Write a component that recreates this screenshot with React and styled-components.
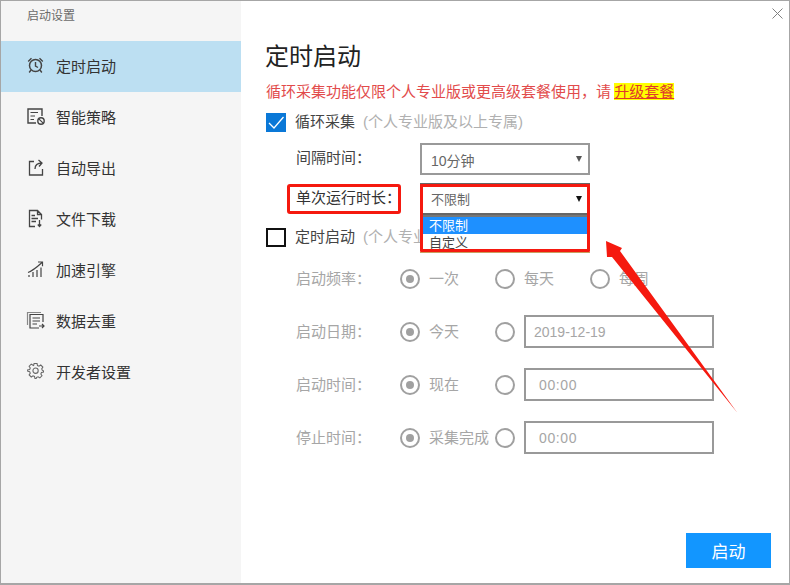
import React from "react";
import styled, { createGlobalStyle } from "styled-components";

const navItems = [
  { id: 1, title: "定时启动", icon: "clock" },
  { id: 2, title: "智能策略", icon: "strategy" },
  { id: 3, title: "自动导出", icon: "export" },
  { id: 4, title: "文件下载", icon: "download" },
  { id: 5, title: "加速引擎", icon: "speed" },
  { id: 6, title: "数据去重", icon: "dedupe" },
  { id: 7, title: "开发者设置", icon: "gear" },
];

const icons = {
  clock: (
    <>
      <circle cx="9.5" cy="9.5" r="6" strokeWidth="1.5" />
      <path
        d="M9.5 6V10L12 11.5M2.2 5.5L5.5 2.2M16.8 5.5L13.5 2.2M5 14L3.2 16.5M14 14L15.8 16.5"
        strokeWidth="1.4"
      />
    </>
  ),
  strategy: (
    <>
      <path d="M10 16H2V2H16V9" strokeWidth="1.4" />
      <path d="M4.5 5.5H12M4.5 9H9M4.5 12.5H8" />
      <circle cx="15" cy="14" r="3.2" strokeWidth="1.4" />
      <path d="M12.8 11.8L17.2 16.2" />
    </>
  ),
  export: (
    <path
      d="M8 3.5H3.5V17H16.5V11M9 11C9 7 11 5 16 5M12.5 2L16 5L13 8.5"
      strokeWidth="1.3"
    />
  ),
  download: (
    <path
      d="M9 17.5H3.5V1.5H11.5L15.5 5.5V10.5M11.5 1.5V5.5H15.5M5.5 6.5H9M5.5 9.5H12M5.5 12.5H10M13.5 11V17.5M11.8 15.5L13.5 17.5L15.2 15.5"
      strokeWidth="1.3"
    />
  ),
  speed: (
    <path d="M2 12.5C6 11 10 8 16 2.5M12 2H16.5V6.2M3 17V15M7 17V12M11 17V10M15 17V7.5" />
  ),
  dedupe: (
    <>
      <path d="M1.5 14V1.5H15" stroke="#888" />
      <path d="M17 11V3.5H4V17H13" />
      <path d="M6.5 7H14M6.5 10H14M6.5 13H11M13 15H18M16 13L18 15L16 17" />
    </>
  ),
  gear: (
    <g transform="translate(1.2 0.2) scale(0.88)" stroke="#666">
      <path d="M7.8 1.5H11.2L11.7 3.8L13.4 4.5L15.4 3.2L17.8 5.6L16.5 7.6L17.2 9.3L18.5 9.8V11.2L16.2 11.7L15.5 13.4L16.8 15.4L14.4 17.8L12.4 16.5L10.7 17.2L10.2 18.5H8.8L8.3 16.2L6.6 15.5L4.6 16.8L2.2 14.4L3.5 12.4L2.8 10.7L0.5 10.2V8.8L2.8 8.3L3.5 6.6L2.2 4.6L4.6 2.2L6.6 3.5L7.3 3.8Z" />
      <circle cx="9.5" cy="9.7" r="3" />
    </g>
  ),
};

const scheduleRows = [
  { id: 1, label: "启动频率：", first: "一次", options: ["每天", "每周"] },
  { id: 2, label: "启动日期：", first: "今天", value: "2019-12-19" },
  { id: 3, label: "启动时间：", first: "现在", value: "00:00", indented: true },
  { id: 4, label: "停止时间：", first: "采集完成", value: "00:00", indented: true },
];

const App = () => (
  <>
    <GlobalStyle />
    <Dialog>
      <Sidebar>
        <SidebarTitle>启动设置</SidebarTitle>
        {navItems.map((item, i) => (
          <NavItem key={item.id} $active={i === 0}>
            <NavIcon viewBox="0 0 19 19">{icons[item.icon]}</NavIcon>
            <NavText>{item.title}</NavText>
          </NavItem>
        ))}
      </Sidebar>
      <Main>
        <CloseIcon viewBox="0 0 11 11">
          <path d="M0.5 0.5L10.5 10.5M10.5 0.5L0.5 10.5" />
        </CloseIcon>
        <Title>定时启动</Title>
        <Notice>
          循环采集功能仅限个人专业版或更高级套餐使用，请 <Upgrade>升级套餐</Upgrade>
        </Notice>
        <CheckRow>
          <CheckedBox>
            <svg width="20" height="19" viewBox="0 0 20 19">
              <path d="M3 10L8 15L17.5 4" fill="none" stroke="#fff" strokeWidth="1.3" />
            </svg>
          </CheckedBox>
          <CheckLabel>循环采集</CheckLabel>
          <Hint>(个人专业版及以上专属)</Hint>
        </CheckRow>
        <SelectRow>
          <SelectLabel>间隔时间：</SelectLabel>
          <SelectBox>
            10分钟
            <Caret />
          </SelectBox>
        </SelectRow>
        <SelectRow $open>
          <SelectLabel $strong>
            单次运行时长：
            <LabelMark />
          </SelectLabel>
          <SelectBox $open>
            不限制
            <Caret $open />
            <Dropdown>
              <DropdownOption $selected>不限制</DropdownOption>
              <DropdownOption>自定义</DropdownOption>
            </Dropdown>
            <DropdownMark />
          </SelectBox>
        </SelectRow>
        <CheckRow $second>
          <EmptyBox />
          <CheckLabel>定时启动</CheckLabel>
          <Hint>(个人专业版及以上专属)</Hint>
        </CheckRow>
        <Schedule>
          {scheduleRows.map((row) => (
            <ScheduleRow key={row.id}>
              <ScheduleLabel>{row.label}</ScheduleLabel>
              <RadioCell>
                <Radio $checked />
                <RadioText>{row.first}</RadioText>
              </RadioCell>
              {row.options &&
                row.options.map((opt) => (
                  <RadioCell key={opt}>
                    <Radio />
                    <RadioText>{opt}</RadioText>
                  </RadioCell>
                ))}
              {row.value && (
                <InputCell>
                  <Radio />
                  <FakeInput $indented={row.indented}>{row.value}</FakeInput>
                </InputCell>
              )}
            </ScheduleRow>
          ))}
        </Schedule>
        <Footer>
          <StartButton>启动</StartButton>
        </Footer>
        <Arrow viewBox="0 0 140 180" width="140" height="180">
          <path d="M1 1L17 8L15 11L132.5 173L7 17L2 17Z" fill="#f5190f" />
        </Arrow>
      </Main>
    </Dialog>
  </>
);

export default App;

const GlobalStyle = createGlobalStyle`
  html, body {
    margin: 0;
    padding: 0;
    background: #fff;
  }
  body {
    font-family: "Liberation Sans", "Noto Sans CJK SC", sans-serif;
  }
  * {
    box-sizing: border-box;
  }
`;

const Dialog = styled.div`
  width: 790px;
  height: 585px;
  display: flex;
  border: 1px solid #a6a6a6;
  border-bottom-width: 2px;
  background: #fff;
  overflow: hidden;
`;

const Sidebar = styled.aside`
  width: 240px;
  flex-shrink: 0;
  background: #f5f5f5;
`;

const SidebarTitle = styled.div`
  height: 40px;
  padding: 7px 0 0 26px;
  font-size: 12px;
  line-height: 16px;
  color: #6b6b6b;
`;

const NavItem = styled.div`
  height: 51px;
  display: flex;
  align-items: center;
  padding-left: 25px;
  font-size: 15px;
  color: #333;
  background: ${(p) => (p.$active ? "#bcdff2" : "transparent")};
`;

const NavIcon = styled.svg`
  width: 19px;
  height: 19px;
  margin: 0 11px 2px 0;
  fill: none;
  stroke: #444;
  stroke-width: 1.2;
`;

const NavText = styled.span`
  line-height: 20px;
`;

const Main = styled.main`
  position: relative;
  flex: 1;
  display: flex;
  flex-direction: column;
  padding: 40px 18px 15px 25px;
`;

const CloseIcon = styled.svg`
  position: absolute;
  top: 7px;
  right: 6px;
  width: 11px;
  height: 11px;
  fill: none;
  stroke: #808080;
  stroke-width: 1;
`;

const Title = styled.h1`
  margin: 0 0 0 -1px;
  font-size: 24px;
  line-height: 32px;
  font-weight: 400;
  color: #222;
`;

const Notice = styled.div`
  margin-top: 9px;
  font-size: 15px;
  line-height: 20px;
  word-spacing: -1px;
  color: #e24b4b;
`;

const Upgrade = styled.span`
  background: #ffff00;
  text-decoration: underline;
  color: #e0392b;
`;

const CheckRow = styled.div`
  display: flex;
  align-items: center;
  height: 19px;
  margin-top: ${(p) => (p.$second ? 13 : 11)}px;
`;

const CheckedBox = styled.div`
  width: 20px;
  height: 19px;
  background: #0a78d7;
  line-height: 0;
`;

const EmptyBox = styled.div`
  width: 20px;
  height: 19px;
  border: 2px solid #111;
`;

const CheckLabel = styled.span`
  margin-left: 9px;
  padding-bottom: 2px;
  font-size: 15px;
  line-height: 20px;
  color: #444;
`;

const Hint = styled.span`
  margin-left: 8px;
  padding-bottom: 2px;
  font-size: 15px;
  line-height: 20px;
  color: #b0b0b0;
`;

const SelectRow = styled.div`
  display: flex;
  align-items: center;
  height: 32px;
  margin-top: ${(p) => (p.$open ? 8 : 11)}px;
  padding-left: 30px;
  position: relative;
  z-index: ${(p) => (p.$open ? 2 : 1)};
`;

const SelectLabel = styled.div`
  position: relative;
  width: 124px;
  padding-bottom: 2px;
  font-size: 15px;
  line-height: 20px;
  color: ${(p) => (p.$strong ? "#333" : "#444")};
`;

const LabelMark = styled.span`
  position: absolute;
  left: -9px;
  top: -4px;
  width: 114px;
  height: 30px;
  border: 3px solid #f5190f;
  border-radius: 3px;
`;

const SelectBox = styled.div`
  position: relative;
  width: 170px;
  height: 32px;
  padding-left: 9px;
  font-size: ${(p) => (p.$open ? 13 : 14)}px;
  line-height: ${(p) => (p.$open ? 30 : 32)}px;
  color: #666;
  border: 2px solid ${(p) => (p.$open ? "#666" : "#999")};
`;

const Caret = styled.i`
  position: absolute;
  right: 6px;
  top: 11px;
  border-left: 3px solid transparent;
  border-right: 3px solid transparent;
  border-top: 6px solid ${(p) => (p.$open ? "#111" : "#555")};
`;

const Dropdown = styled.div`
  position: absolute;
  left: -2px;
  right: -2px;
  top: 30px;
  height: 38px;
  padding: 0 2px;
  background: #fff;
  overflow: hidden;
  border-top: 2px solid #777;
  border-bottom: 1px solid #c8a060;
`;

const DropdownOption = styled.div`
  height: 17px;
  padding-left: 7px;
  font-size: 13px;
  line-height: 17px;
  color: ${(p) => (p.$selected ? "#fff" : "#444")};
  background: ${(p) => (p.$selected ? "#1e90ff" : "#fff")};
`;

const DropdownMark = styled.span`
  position: absolute;
  left: -2px;
  top: -1px;
  width: 170px;
  height: 68px;
  border: 3px solid #f5190f;
  border-radius: 1px;
`;

const Schedule = styled.div`
  display: flex;
  flex-direction: column;
  gap: 20px;
  margin-top: 15px;
  padding-left: 30px;
`;

const ScheduleRow = styled.div`
  display: flex;
  align-items: center;
  height: 33px;
`;

const ScheduleLabel = styled.div`
  width: 104px;
  font-size: 15px;
  line-height: 20px;
  color: #a6a6a6;
`;

const RadioCell = styled.div`
  width: 95px;
  display: flex;
  align-items: center;
  gap: 9px;
`;

const InputCell = styled.div`
  display: flex;
  align-items: center;
  gap: 9px;
`;

const Radio = styled.span`
  position: relative;
  flex-shrink: 0;
  width: 20px;
  height: 20px;
  border: 2px solid #a0a0a0;
  border-radius: 50%;
  &::after {
    content: "";
    display: ${(p) => (p.$checked ? "block" : "none")};
    position: absolute;
    left: 4px;
    top: 4px;
    width: 8px;
    height: 8px;
    border-radius: 50%;
    background: #a0a0a0;
  }
`;

const RadioText = styled.span`
  font-size: 15px;
  line-height: 20px;
  white-space: nowrap;
  color: #a6a6a6;
`;

const FakeInput = styled.div`
  width: 190px;
  height: 33px;
  padding-left: ${(p) => (p.$indented ? 13 : 8)}px;
  font-size: 14px;
  line-height: 30px;
  letter-spacing: ${(p) => (p.$indented ? 0.6 : 0)}px;
  color: #a6a6a6;
  border: 2px solid #999;
`;

const Footer = styled.div`
  margin-top: auto;
  display: flex;
  justify-content: flex-end;
`;

const StartButton = styled.button`
  width: 85px;
  height: 35px;
  padding: 0;
  border: 0;
  font-family: inherit;
  font-size: 17px;
  color: #fff;
  background: #1296ff;
`;

const Arrow = styled.svg`
  position: absolute;
  left: 364px;
  top: 239px;
  z-index: 3;
`;
